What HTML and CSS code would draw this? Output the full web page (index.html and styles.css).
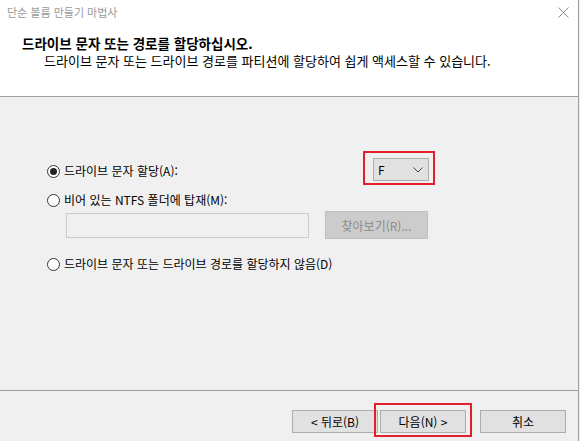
FILE: index.html
```html
<!DOCTYPE html>
<html lang="ko">
<head>
    <link rel="stylesheet" href="styles.css">
</head>
<body>
    <div class="wizard">
        <div class="header">
            <div class="titlebar">
                <span class="caption">단순 볼륨 만들기 마법사</span>
                <svg class="close" width="11" height="11" viewBox="0 0 11 11">
                    <path d="M0.5 0.5 L10.5 10.5 M10.5 0.5 L0.5 10.5" stroke="#8a8a8a" stroke-width="1" fill="none"/>
                </svg>
            </div>
            <h6 class="heading">드라이브 문자 또는 경로를 할당하십시오.</h6>
            <p class="subheading">드라이브 문자 또는 드라이브 경로를 파티션에 할당하여 쉽게 액세스할 수 있습니다.</p>
        </div>

        <div class="content">
            <div class="row first">
                <label class="radio">
                    <span class="dot checked"></span>
                    <span>드라이브 문자 할당(A):</span>
                </label>
                <div class="combo marked">
                    <span>F</span>
                    <svg width="10" height="6" viewBox="0 0 10 6">
                        <path d="M0.5 0.5 L5 5 L9.5 0.5" stroke="#444" stroke-width="1" fill="none"/>
                    </svg>
                </div>
            </div>
            <div class="row second">
                <label class="radio">
                    <span class="dot"></span>
                    <span>비어 있는 NTFS 폴더에 탑재(M):</span>
                </label>
            </div>
            <div class="row folder">
                <div class="textbox"></div>
                <button class="browse" disabled>찾아보기(R)...</button>
            </div>
            <div class="row third">
                <label class="radio">
                    <span class="dot"></span>
                    <span>드라이브 문자 또는 드라이브 경로를 할당하지 않음(D)</span>
                </label>
            </div>
        </div>

        <div class="footer">
            <button class="btn back">&lt; 뒤로(B)</button>
            <button class="btn next marked">다음(N) &gt;</button>
            <button class="btn cancel">취소</button>
        </div>
    </div>
</body>
</html>
```

FILE: styles.css
```css
html, body {
    width: 100%;
    height: 100%;
}

* {
    margin: 0;
    padding: 0;
    box-sizing: border-box;
}

body {
    background: #f0f0f0;
    font-family: "Noto Sans CJK KR", "Liberation Sans", sans-serif;
    font-size: 12px;
    color: #000;
}

.wizard {
    width: 579px;
    height: 441px;
    border-right: 1px solid #a0a0a0;
    display: flex;
    flex-direction: column;
}

.header {
    height: 97px;
    background: #fff;
    border-bottom: 1px solid #a0a0a0;
    padding: 4px 0 0 7px;
}

.titlebar {
    display: flex;
    align-items: center;
    justify-content: space-between;
    height: 16px;
    padding-right: 9px;
}

.caption {
    color: #999;
    font-size: 11px;
    line-height: 16px;
}

.heading {
    margin: 15px 0 0 15px;
    font-size: 13.5px;
    font-weight: bold;
    line-height: 17px;
}

.subheading {
    margin-left: 37px;
    font-size: 13px;
    line-height: 17px;
}

.content {
    height: 294px;
    border-bottom: 1px solid #a0a0a0;
    padding: 54px 0 0 47px;
}

.row {
    display: flex;
}

.row.first {
    height: 34px;
    align-items: flex-start;
}

.row.first .radio {
    width: 326px;
    margin-top: 12px;
}

.row.second {
    margin-top: 7px;
}

.row.folder {
    margin: 3px 0 0 19px;
    height: 28px;
    align-items: center;
    gap: 16px;
}

.row.third {
    margin-top: 17px;
}

.radio {
    display: flex;
    align-items: center;
    gap: 4px;
    line-height: 16px;
    white-space: nowrap;
}

.dot {
    width: 13px;
    height: 13px;
    border: 1px solid #333;
    border-radius: 50%;
    display: flex;
    align-items: center;
    justify-content: center;
    background: #fff;
}

.dot.checked::after {
    content: "";
    width: 7px;
    height: 7px;
    border-radius: 50%;
    background: #222;
}

.combo {
    margin-top: 7px;
    width: 56px;
    height: 23px;
    background: #e1e1e1;
    border: 1px solid #adadad;
    display: flex;
    align-items: center;
    justify-content: space-between;
    padding: 0 5px 0 4px;
}

.marked {
    position: relative;
}

.marked::after {
    content: "";
    position: absolute;
    top: -8px;
    bottom: -5px;
    left: -11px;
    right: -7px;
    border: 2px solid #e0202c;
}

.textbox {
    width: 243px;
    height: 25px;
    background: #f0f0f0;
    border: 1px solid #cccccc;
}

.browse {
    width: 103px;
    height: 28px;
    background: #cccccc;
    border: 1px solid #bfbfbf;
    color: #8a8a8a;
    font: inherit;
}

.footer {
    display: flex;
    justify-content: flex-end;
    padding: 19px 12px 0 0;
}

.btn {
    width: 86px;
    height: 23px;
    background: #e1e1e1;
    border: 1px solid #adadad;
    font: inherit;
    color: #000;
}

.btn.back {
    margin-right: 2px;
}

.btn.next::after {
    left: -7px;
    right: -7px;
}

.btn.cancel {
    margin-left: 14px;
}
```
